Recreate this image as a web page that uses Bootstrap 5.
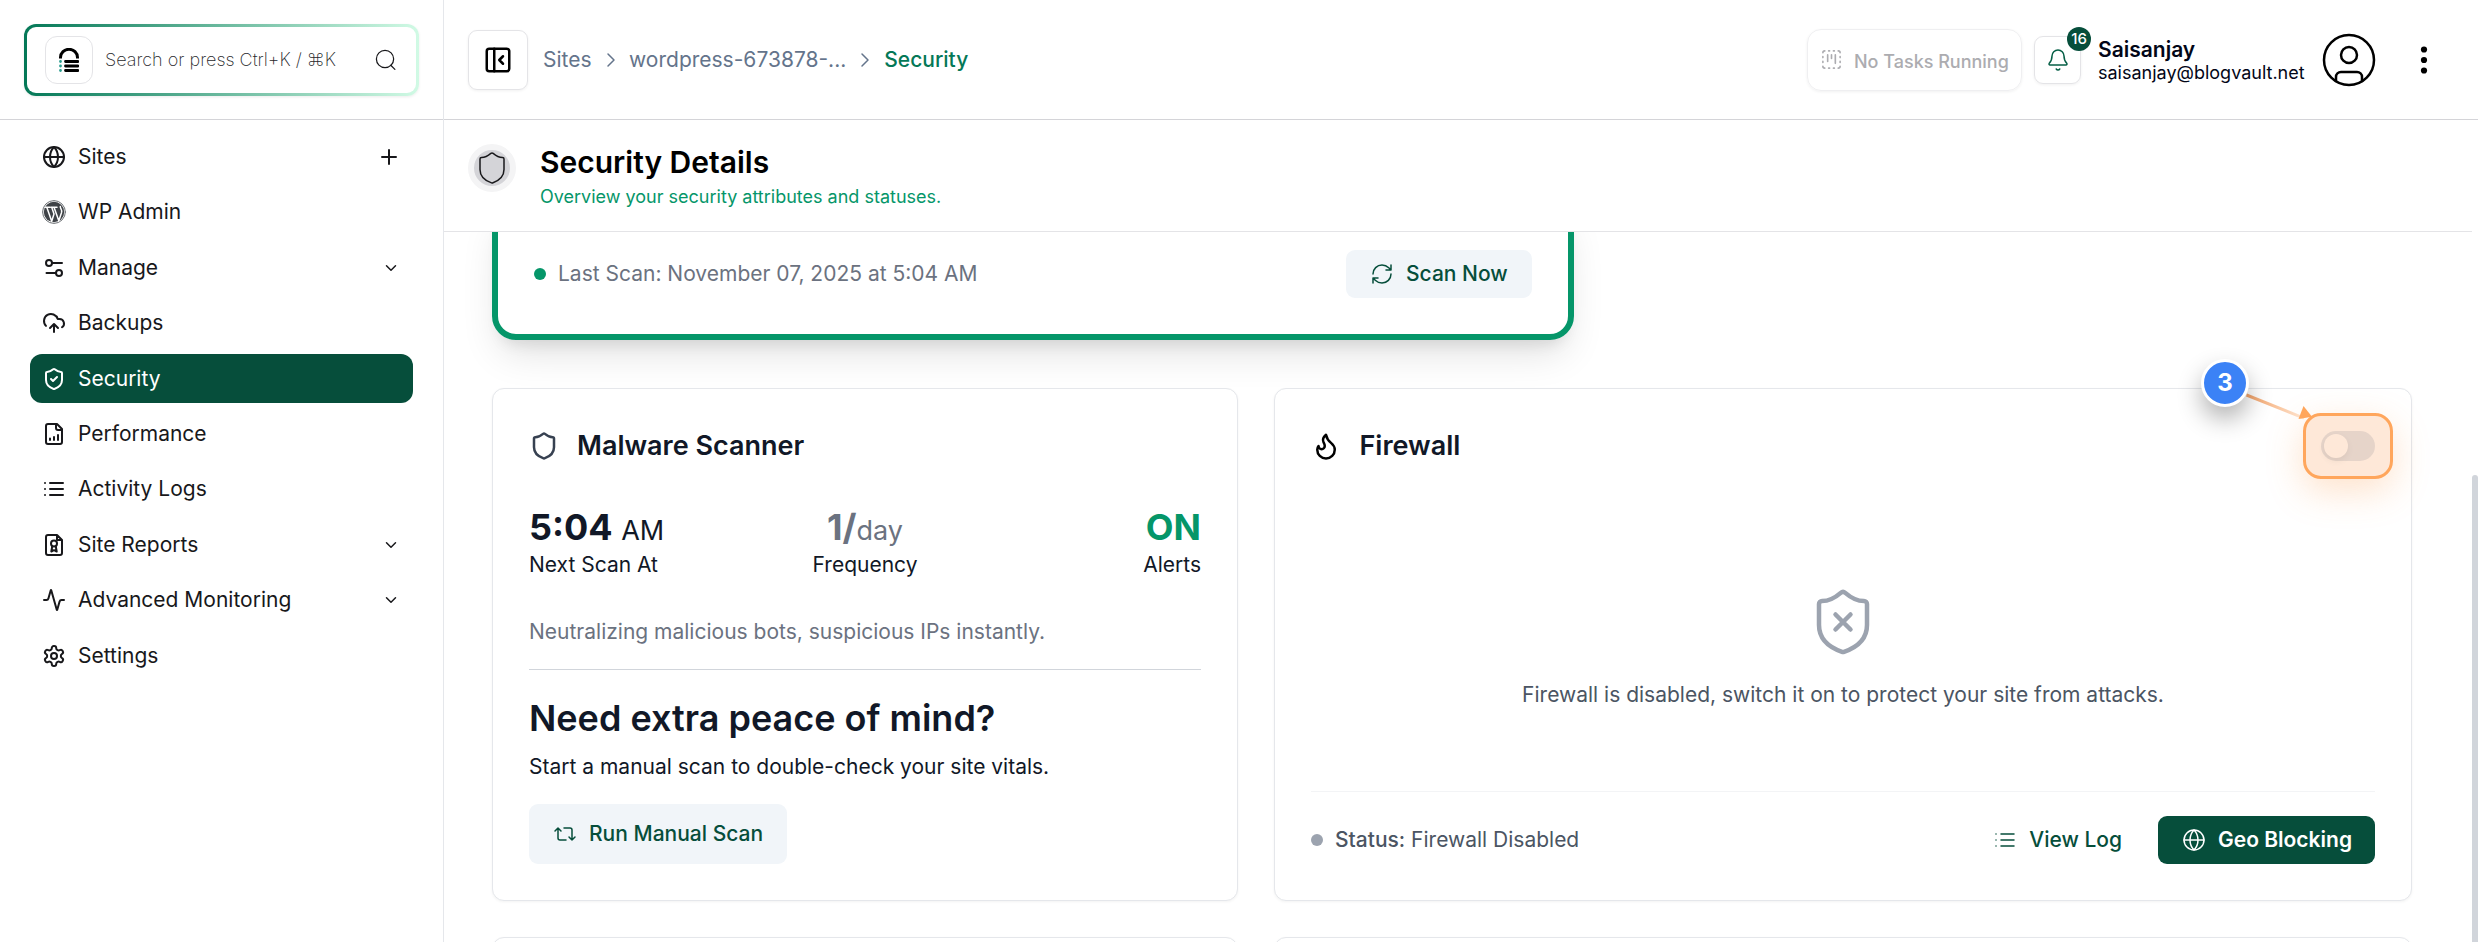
<!DOCTYPE html>
<html lang="en">
<head>
<meta charset="utf-8">
<title>Security Details</title>
<link href="https://cdn.jsdelivr.net/npm/bootstrap@5.3.0/dist/css/bootstrap.min.css" rel="stylesheet">
<style>
body{font-family:Inter,"Noto Sans",sans-serif;font-size:21px;line-height:30px;color:#111827;background:#fff;height:942px;overflow:hidden}
svg{display:block;flex:none;fill:none;stroke:currentColor;stroke-linecap:round;stroke-linejoin:round}
svg:not([stroke-width]){stroke-width:2}
.fw-med{font-weight:500}
.fs-18{font-size:18px;line-height:24px}
.sidebar{width:444px;border-right:1px solid #e5e7eb;color:#18181b}
.bar{height:120px;border-bottom:1px solid #d4d4d8}
.search{width:395px;height:72px;margin-left:24px;border:3px solid transparent;border-radius:12px;background:linear-gradient(#fff,#fff) padding-box,linear-gradient(90deg,#047857,#d1fae5) border-box;box-shadow:0 1px 3px rgba(0,0,0,.08);padding:0 19px 0 18px}
.logo{width:48px;height:48px;border:1px solid #e4e4e7;border-radius:12px}
.hint{font-size:18px;font-weight:200;color:#27272a;margin-left:12px}
.side-nav{padding:12.5px 30px 0;gap:6.4px}
.side-nav .nav-link{height:49px;padding:0 13px 0 12px;border-radius:12px;color:#18181b;gap:12px}
.side-nav .nav-link.active{background:#064e3b;color:#fff}
.side-nav .end-ico{margin-left:auto}
.boxed{border:1px solid #e4e4e7;border-radius:9px;box-shadow:0 1px 3px rgba(0,0,0,.06)}
.toggle-side{width:60px;height:60px;margin-left:24px;color:#000}
.crumbs{margin-left:15px;color:#64748b}
.crumbs .now{color:#047857}
.tasks{width:215px;height:62px;border-radius:14px;color:#acacb0;border-color:#efeff1;padding-left:12px;gap:11px}
.bell{width:47px;height:48px;margin-left:12px;color:#065f46}
.count{left:32px;top:-10px;width:24px;height:24px;border-radius:50%;background:#064e3b;color:#fff;font-size:15px;font-weight:500;line-height:24px}
.user{margin-left:17px;width:207px;color:#020617}
.title-bar{height:112px;border-bottom:1px solid #e4e4e7;width:2028px;padding-left:24px}
.halo{width:48px;height:48px;border-radius:50%;background:#d4d4d8;border:6px solid #f4f4f5;margin-top:-15px;color:#18181b}
.titles{margin-left:24px;padding-top:2px}
.titles h1{font-size:30px;font-weight:600;line-height:36px;color:#000;margin:0 0 5px}
.green{color:#059669}
.viewport{height:710px;overflow:hidden;padding:0 66px 0 48px}
.scan{width:1082px;height:138px;margin-top:-30px;border:6px solid #059669;border-radius:24px;box-shadow:0 20px 38px -7px rgba(0,0,0,.12),0 12px 15px -9px rgba(0,0,0,.1);padding:30px 36px 0;color:#6b7280}
.dot{width:12px;height:12px;border-radius:50%;background:#059669;flex:none}
.act{height:48px;border-radius:9px;border:0;background:#f1f5f9;color:#064e3b;font-size:21px;font-weight:500;line-height:30px;padding:0}
.tile{border:1px solid #e5e7eb;border-radius:12px;height:513px;background:#fff;box-shadow:0 1px 3px rgba(0,0,0,.05);padding:36px 36px 0}
.tile h2{font-size:27px;font-weight:600;line-height:42px;margin:0}
.left{width:746px}.right{width:1138px}
.big{font-size:36px;line-height:42px;height:43px;font-weight:700}
.big small{font-size:27px;font-weight:400;line-height:1}
.stat-label{line-height:32px}
.muted{color:#6b7280}
.need{font-size:36px;line-height:45px;font-weight:600;margin:0}
.slate{color:#4b5563}
.pill{width:54px;height:30px;border-radius:15px;background:#c3cdda;padding:3px}
.pill span{width:24px;height:24px;border-radius:50%;background:#fff;box-shadow:0 3px 6px rgba(0,0,0,.15)}
.spot{left:-18px;top:-18px;width:90px;height:66px;border:3px solid #ffa65c;border-radius:18px;background:rgba(253,217,190,.6);box-shadow:0 12px 36px rgba(253,150,70,.28)}
.step{left:-120px;top:-72px;width:48px;height:48px;border-radius:50%;border:3px solid #fff;background:#3b82f6;color:#fff;font-size:24px;font-weight:700;line-height:42px;box-shadow:0 12px 24px rgba(0,0,0,.3)}
.arrow{left:-81px;top:-42px}
.thumb{right:0;top:475px;width:6px;height:480px;border-radius:3px;background:#d1d5db}
</style>
</head>
<body class="d-flex position-relative">
<svg width="0" height="0" stroke-width="" class="position-absolute"><defs>
<symbol id="globe" viewBox="0 0 24 24"><circle cx="12" cy="12" r="10"/><path d="M12 2a14.5 14.5 0 0 0 0 20 14.5 14.5 0 0 0 0-20M2 12h20"/></symbol>
<symbol id="shield" viewBox="0 0 24 24"><path d="M20 13c0 5-3.5 7.5-7.66 8.95a1 1 0 0 1-.67-.01C7.5 20.5 4 18 4 13V6a1 1 0 0 1 1-1c2 0 4.5-1.2 6.24-2.72a1.17 1.17 0 0 1 1.52 0C14.51 3.81 17 5 19 5a1 1 0 0 1 1 1z"/></symbol>
<symbol id="list" viewBox="0 0 24 24"><path d="M8 6h13M8 12h13M8 18h13M3 6h.01M3 12h.01M3 18h.01"/></symbol>
<symbol id="down" viewBox="0 0 24 24"><path d="m6 9 6 6 6-6"/></symbol>
<symbol id="next" viewBox="0 0 24 24"><path d="m9 18 6-6-6-6"/></symbol>
</defs></svg>

<aside class="sidebar flex-shrink-0">
  <div class="bar d-flex align-items-center">
    <div class="search d-flex align-items-center">
      <span class="logo d-flex align-items-center justify-content-center">
        <svg width="20" height="24" viewBox="0 0 20 24"><path d="M1.500 10.500V9.500a8.500 8.200 0 0 1 17 0v1" stroke="#000" stroke-width="3" stroke-linecap="butt"/><path d="M6.500 13.500H19M6.500 18H19M6.500 22.500H19" stroke="#000" stroke-width="2.800"/><path d="M1.500 13.500h.01M1.500 18h.01M1.500 22.500h.01" stroke="#2a9d8f" stroke-width="2.800"/></svg>
      </span>
      <span class="hint">Search or press Ctrl+K / ⌘K</span>
      <svg class="ms-auto" width="23" height="23" viewBox="0 0 24 24" stroke-width="1.300"><circle cx="11.500" cy="11.500" r="9"/><path d="m17.500 18 4.300 4.300"/></svg>
    </div>
  </div>
  <nav class="side-nav nav flex-column">
    <a class="nav-link d-flex align-items-center"><svg width="24" height="24"><use href="#globe"/></svg>Sites<svg class="end-ico" width="24" height="24" viewBox="0 0 24 24" style="margin-right:-1px"><path d="M5 12h14M12 5v14"/></svg></a>
    <a class="nav-link d-flex align-items-center"><svg width="24" height="24" viewBox="0 0 24 24"><circle cx="12" cy="12" r="11.400" stroke="#6b6f73" stroke-width="1"/><circle cx="12" cy="12" r="10.200" fill="#3f4347" stroke="none"/><path d="M3.600 7.200h4.800M10 7.200h5M4.800 7.200l4.900 14 2.300-7.200-2.300-6.800M12 7.200l4.800 13.500 2.700-8c1-3.200-1.400-3.800-1.200-6.200" stroke="#fff" stroke-width="1.500"/></svg>WP Admin</a>
    <a class="nav-link d-flex align-items-center"><svg width="24" height="24" viewBox="0 0 24 24"><path d="M10.500 7H20M4.500 17H14"/><circle cx="7" cy="7" r="3"/><circle cx="17" cy="17" r="3"/></svg>Manage<svg class="end-ico" width="18" height="18"><use href="#down"/></svg></a>
    <a class="nav-link d-flex align-items-center"><svg width="24" height="24" viewBox="0 0 24 24"><path d="M12 13v8M4 14.899A7 7 0 1 1 15.710 8h1.790a4.500 4.500 0 0 1 2.500 8.242M8 17l4-4 4 4"/></svg>Backups</a>
    <a class="nav-link active d-flex align-items-center"><svg width="24" height="24"><use href="#shield"/><path d="m9 12 2 2 4-4"/></svg>Security</a>
    <a class="nav-link d-flex align-items-center"><svg width="24" height="24" viewBox="0 0 24 24"><path d="M15 2H6a2 2 0 0 0-2 2v16a2 2 0 0 0 2 2h12a2 2 0 0 0 2-2V7zM14 2v4a2 2 0 0 0 2 2h4M8 18v-1.500M12 18v-3M16 18v-5"/></svg>Performance</a>
    <a class="nav-link d-flex align-items-center"><svg width="24" height="24"><use href="#list"/></svg>Activity Logs</a>
    <a class="nav-link d-flex align-items-center"><svg width="24" height="24" viewBox="0 0 24 24"><path d="M15 2H6a2 2 0 0 0-2 2v16a2 2 0 0 0 2 2h12a2 2 0 0 0 2-2V7zM15 2v5h5"/><circle cx="12" cy="10.500" r="3"/><path d="m10.300 13-1 5.500 2.700-1.300 2.700 1.300-1-5.500"/></svg>Site Reports<svg class="end-ico" width="18" height="18"><use href="#down"/></svg></a>
    <a class="nav-link d-flex align-items-center"><svg width="24" height="24" viewBox="0 0 24 24"><path d="M22 12h-2.480a2 2 0 0 0-1.930 1.460l-2.350 8.360a.25.25 0 0 1-.48 0L9.240 2.180a.25.25 0 0 0-.48 0l-2.350 8.360A2 2 0 0 1 4.490 12H2"/></svg>Advanced Monitoring<svg class="end-ico" width="18" height="18"><use href="#down"/></svg></a>
    <a class="nav-link d-flex align-items-center"><svg width="24" height="24" viewBox="0 0 24 24"><path d="M12.220 2h-.44a2 2 0 0 0-2 2v.18a2 2 0 0 1-1 1.730l-.43.25a2 2 0 0 1-2 0l-.15-.08a2 2 0 0 0-2.730.73l-.22.38a2 2 0 0 0 .73 2.730l.15.1a2 2 0 0 1 1 1.720v.51a2 2 0 0 1-1 1.740l-.15.09a2 2 0 0 0-.73 2.730l.22.38a2 2 0 0 0 2.730.73l.15-.08a2 2 0 0 1 2 0l.43.25a2 2 0 0 1 1 1.730V20a2 2 0 0 0 2 2h.44a2 2 0 0 0 2-2v-.18a2 2 0 0 1 1-1.730l.43-.25a2 2 0 0 1 2 0l.15.08a2 2 0 0 0 2.730-.73l.22-.39a2 2 0 0 0-.73-2.730l-.15-.08a2 2 0 0 1-1-1.740v-.5a2 2 0 0 1 1-1.740l.15-.09a2 2 0 0 0 .73-2.730l-.22-.38a2 2 0 0 0-2.730-.73l-.15.08a2 2 0 0 1-2 0l-.43-.25a2 2 0 0 1-1-1.730V4a2 2 0 0 0-2-2z"/><circle cx="12" cy="12" r="3"/></svg>Settings</a>
  </nav>
</aside>

<main class="flex-grow-1">
  <header class="bar d-flex align-items-center">
    <button class="btn p-0 boxed toggle-side d-flex align-items-center justify-content-center"><svg width="30" height="30" viewBox="0 0 24 24"><rect x="3" y="3" width="18" height="18" rx="2"/><path d="M9 3v18M16 15l-3-3 3-3"/></svg></button>
    <div class="crumbs d-flex align-items-center fw-med">
      <span class="fw-normal">Sites</span><svg style="margin:0 6.500px 0 7px" width="24" height="24" stroke-width="1.500"><use href="#next"/></svg>
      <span class="fw-normal">wordpress-673878-...</span><svg style="margin:0 7px" width="24" height="24" stroke-width="1.500"><use href="#next"/></svg>
      <span class="now">Security</span>
    </div>
    <div class="d-flex align-items-center ms-auto">
      <div class="boxed tasks d-flex align-items-center"><svg width="23" height="23" viewBox="0 0 24 24" stroke-width="1.700"><path d="M8 7v7M12 7v4M16 7v9M5 3a2 2 0 0 0-2 2M9 3h1M14 3h1M19 3a2 2 0 0 1 2 2M21 9v1M21 14v1M21 19a2 2 0 0 1-2 2M14 21h1M9 21h1M5 21a2 2 0 0 1-2-2M3 14v1M3 9v1"/></svg><span class="fs-18 fw-med text-nowrap pt-1">No Tasks Running</span></div>
      <div class="boxed bell position-relative d-flex align-items-center justify-content-center"><svg width="24" height="24" viewBox="0 0 24 24" stroke-width="1.500"><path d="M10.270 21a2 2 0 0 0 3.460 0M3.260 15.330A1 1 0 0 0 4 17h16a1 1 0 0 0 .74-1.670C19.410 13.960 18 12.500 18 8A6 6 0 0 0 6 8c0 4.500-1.410 5.960-2.740 7.330"/></svg><span class="count position-absolute text-center">16</span></div>
      <div class="user"><div class="fw-semibold" style="line-height:26px">Saisanjay</div><div class="fs-18" style="line-height:20px">saisanjay@blogvault.net</div></div>
      <svg style="margin-left:17px;color:#000" width="54" height="54" viewBox="0 0 54 54" stroke-width="2.500"><circle cx="27" cy="27" r="25"/><circle cx="27" cy="22" r="8"/><path d="M14 48v-4a5 5 0 0 1 5-5h16a5 5 0 0 1 5 5v4"/></svg>
      <svg style="margin:0 50px 0 44px" width="8" height="30" viewBox="0 0 8 30"><g fill="#000" stroke="none"><circle cx="4" cy="4.500" r="3.100"/><circle cx="4" cy="15" r="3.100"/><circle cx="4" cy="25.500" r="3.100"/></g></svg>
    </div>
  </header>
  <div class="title-bar d-flex align-items-center">
    <span class="halo d-flex align-items-center justify-content-center"><svg width="36" height="36" stroke-width="1"><use href="#shield"/></svg></span>
    <div class="titles"><h1>Security Details</h1><div class="fs-18 green">Overview your security attributes and statuses.</div></div>
  </div>
  <div class="viewport">
    <section class="scan">
      <div class="d-flex align-items-center" style="padding-top:12px">
        <span class="dot"></span><span style="margin-left:12px">Last Scan: November 07, 2025 at 5:04 AM</span>
        <button class="btn act ms-auto d-flex align-items-center" style="width:186px;padding-left:24px;gap:12px"><svg width="24" height="24" viewBox="0 0 24 24" stroke-width="1.500"><path d="M3 12a9 9 0 0 1 9-9 9.750 9.750 0 0 1 6.740 2.740L21 8M21 3v5h-5M21 12a9 9 0 0 1-9 9 9.750 9.750 0 0 1-6.740-2.740L3 16M8 16H3v5"/></svg>Scan Now</button>
      </div>
    </section>
    <div class="d-flex" style="gap:36px;margin-top:48px">
      <section class="tile left">
        <div class="d-flex align-items-center" style="gap:18px"><svg width="30" height="30" style="color:#374151"><use href="#shield"/></svg><h2>Malware Scanner</h2></div>
        <div class="row gx-0" style="margin-top:39px">
          <div class="col-4"><div class="big">5:04 <small>AM</small></div><div class="stat-label">Next Scan At</div></div>
          <div class="col-4 text-center"><div class="big muted">1/<small>day</small></div><div class="stat-label">Frequency</div></div>
          <div class="col-4 text-end"><div class="big green">ON</div><div class="stat-label">Alerts</div></div>
        </div>
        <div class="muted" style="margin-top:36px">Neutralizing malicious bots, suspicious IPs instantly.</div>
        <div style="border-top:1px solid #d1d5db;margin-top:22px"></div>
        <h3 class="need" style="margin-top:26px">Need extra peace of mind?</h3>
        <div style="margin-top:11px">Start a manual scan to double-check your site vitals.</div>
        <button class="btn act d-flex align-items-center" style="height:60px;width:258px;margin-top:22px;padding-left:24px;gap:12px"><svg width="24" height="24" viewBox="0 0 24 24" stroke-width="1.500"><path d="m2 9 3-3 3 3M13 18H7a2 2 0 0 1-2-2V6M22 15l-3 3-3-3M11 6h6a2 2 0 0 1 2 2v10"/></svg>Run Manual Scan</button>
      </section>
      <section class="tile right">
        <div class="d-flex align-items-center"><svg width="30" height="30" viewBox="0 0 24 24" style="color:#000;margin-right:18.500px"><path d="M8.500 14.500A2.500 2.500 0 0 0 11 12c0-1.380-.5-2-1-3-1.072-2.143-.224-4.054 2-6 .5 2.500 2 4.900 4 6.500 2 1.600 3 3.500 3 5.500a7 7 0 1 1-14 0c0-1.153.433-2.294 1-3a2.500 2.500 0 0 0 2.500 2.500z"/></svg><h2>Firewall</h2>
          <div class="ms-auto position-relative">
            <div class="pill"><span class="d-block"></span></div>
            <div class="spot position-absolute"></div>
            <svg class="arrow position-absolute" width="80" height="40" viewBox="0 0 80 40"><defs><linearGradient id="fade" x1="0" x2="1"><stop stop-color="#f2a268"/><stop offset="1" stop-color="#ffe6d2"/></linearGradient></defs><path d="M7 4.500 65 28l-1.500 2.500L6 7.500z" fill="url(#fade)" stroke="none"/><path d="m63.500 17 8.500 10.700L58.500 30z" fill="#ffa65c" stroke="none"/></svg>
            <span class="step position-absolute text-center">3</span>
          </div>
        </div>
        <div class="d-flex flex-column align-items-center slate" style="margin-top:119px"><svg width="72" height="72" viewBox="0 0 24 24" stroke-width="1.500" style="color:#9ca3af"><use href="#shield" width="24" height="24"/><path d="m14.500 9.500-5 5M9.500 9.500l5 5"/></svg><span style="margin-top:22px">Firewall is disabled, switch it on to protect your site from attacks.</span></div>
        <div class="d-flex align-items-center slate" style="border-top:1px solid #f3f4f6;margin-top:81px;padding-top:24px">
          <span class="dot" style="background:#9ca3af"></span><span style="margin-left:12px"><span class="fw-med">Status:</span> Firewall Disabled</span>
          <button class="btn act bg-transparent ms-auto d-flex align-items-center" style="gap:12px;margin-right:36px"><svg width="24" height="24" stroke-width="1.500"><use href="#list"/></svg>View Log</button>
          <button class="btn act d-flex align-items-center" style="width:217px;padding-left:24px;gap:12px;background:#064e3b;color:#fff;font-weight:600"><svg width="24" height="24" stroke-width="1.500"><use href="#globe"/></svg>Geo Blocking</button>
        </div>
      </section>
    </div>
    <div class="d-flex" style="gap:36px;margin-top:36px"><section class="tile left"></section><section class="tile right"></section></div>
  </div>
</main>
<div class="thumb position-absolute"></div>
<script src="https://cdn.jsdelivr.net/npm/bootstrap@5.3.0/dist/js/bootstrap.bundle.min.js"></script>
</body>
</html>
